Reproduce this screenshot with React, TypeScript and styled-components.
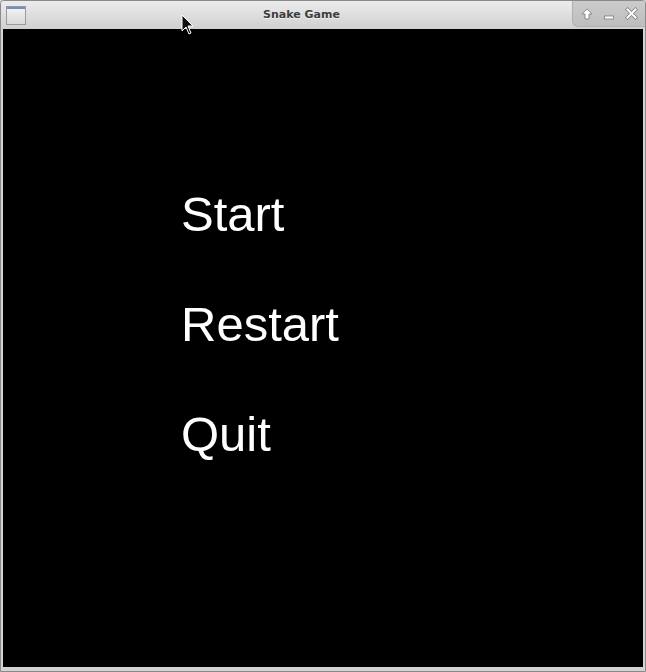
import React from "react";
import styled, { createGlobalStyle } from "styled-components";

const Global = createGlobalStyle`
  html, body { margin: 0; padding: 0; background: #d4d4d4; }
  #root { width: 646px; height: 672px; }
`;

const Window = styled.div`
  position: relative;
  width: 646px;
  height: 672px;
  box-sizing: border-box;
  display: flex;
  flex-direction: column;
  background: #d3d3d3;
  border: 1px solid #8a8a8a;
  border-radius: 4px 4px 0 0;
  overflow: hidden;
`;

const TitleBar = styled.div`
  height: 28px;
  flex: none;
  display: flex;
  align-items: stretch;
  background: linear-gradient(#ececec, #d0d0d0);
  position: relative;
`;

const AppIconSlot = styled.div`
  width: 30px;
  display: flex;
  align-items: flex-start;
  padding: 5px 0 0 5px;
  box-sizing: border-box;
`;

const Title = styled.div`
  flex: 1;
  text-align: center;
  font-family: "DejaVu Sans", sans-serif;
  font-weight: bold;
  font-size: 11px;
  line-height: 28px;
  color: #3c3c3c;
  text-shadow: 0 1px 0 rgba(255, 255, 255, 0.6);
`;

const Buttons = styled.div`
  width: 73px;
  height: 26px;
  display: flex;
  align-items: center;
  gap: 8px;
  padding: 0 0 0 7px;
  box-sizing: border-box;
  background: linear-gradient(#cbcbcb, #bebebe);
  border-left: 1px solid #b0b0b0;
  border-bottom: 1px solid #b0b0b0;
  border-radius: 0 0 0 6px;
`;

const Btn = styled.span`
  width: 14px;
  height: 14px;
  display: flex;
  align-items: center;
  justify-content: center;
`;

const Content = styled.div`
  flex: 1;
  margin: 0 2px 4px 2px;
  background: #000;
  padding: 130px 0 0 178px;
  display: flex;
  flex-direction: column;
  align-items: flex-start;
`;

const MenuItem = styled.div`
  font-family: "Liberation Sans", Arial, sans-serif;
  font-size: 49px;
  line-height: 110px;
  color: #fff;
`;

const Cursor = styled.svg`
  position: absolute;
  left: 180px;
  top: 13px;
`;

export default function App() {
  return (
    <>
      <Global />
      <Window>
        <TitleBar>
          <AppIconSlot>
            <svg width="20" height="19" viewBox="0 0 20 19">
              <defs>
                <linearGradient id="ig" x1="0" y1="0" x2="0" y2="1">
                  <stop offset="0" stopColor="#f6f6f6" />
                  <stop offset="1" stopColor="#d8d8d8" />
                </linearGradient>
              </defs>
              <rect x="0.5" y="0.5" width="19" height="18" fill="url(#ig)" stroke="#9a9a9a" />
              <rect x="1" y="1" width="18" height="2" fill="#6b8fc4" />
            </svg>
          </AppIconSlot>
          <Title>Snake Game</Title>
          <Buttons>
            <Btn>
              <svg width="12" height="12" viewBox="0 0 12 12">
                <path d="M6 1 L11 6 H8 V11 H4 V6 H1 Z" fill="#fff" stroke="#7a7a7a" strokeWidth="0.8" />
              </svg>
            </Btn>
            <Btn>
              <svg width="12" height="12" viewBox="0 0 12 12">
                <rect x="1.5" y="8" width="9" height="3" fill="#fff" stroke="#7a7a7a" strokeWidth="0.8" />
              </svg>
            </Btn>
            <Btn>
              <svg width="13" height="13" viewBox="0 0 13 13">
                <path d="M2.5 2.5 L10.5 10.5 M10.5 2.5 L2.5 10.5" stroke="#7a7a7a" strokeWidth="3.4" strokeLinecap="square" />
                <path d="M2.5 2.5 L10.5 10.5 M10.5 2.5 L2.5 10.5" stroke="#fff" strokeWidth="2" strokeLinecap="square" />
              </svg>
            </Btn>
          </Buttons>
        </TitleBar>
        <Content>
          <MenuItem>Start</MenuItem>
          <MenuItem>Restart</MenuItem>
          <MenuItem>Quit</MenuItem>
        </Content>
        <Cursor width="13" height="21" viewBox="0 0 13 21">
          <path d="M1 1 L1 17 L5 13 L8 20 L10 19 L7 12 L12 12 Z" fill="#111" stroke="#fff" strokeWidth="1" />
        </Cursor>
      </Window>
    </>
  );
}
